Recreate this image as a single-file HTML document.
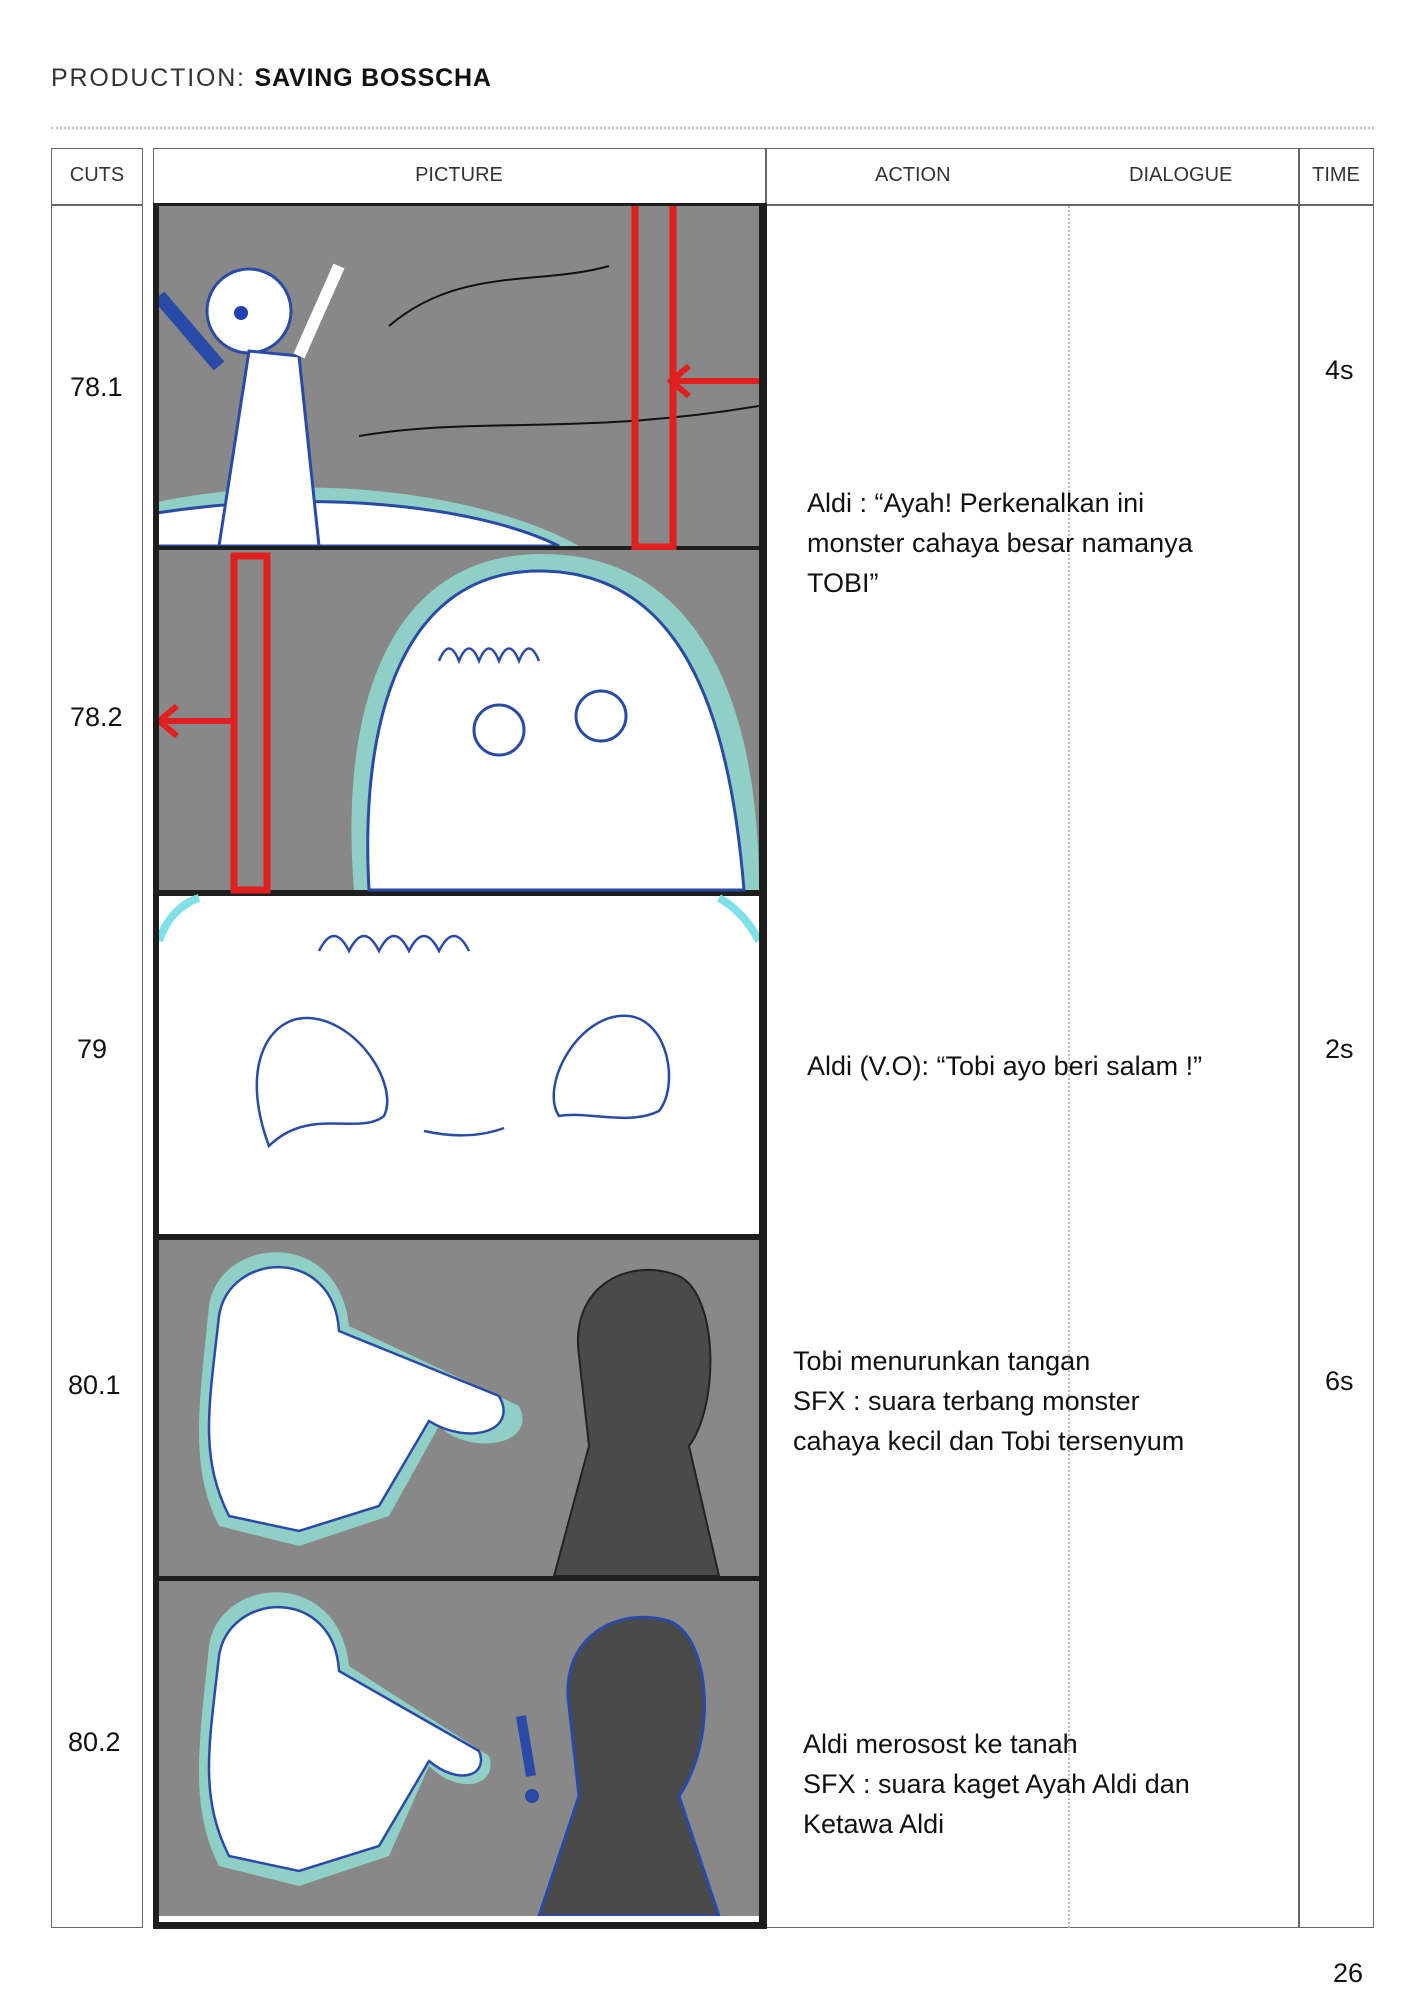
<!DOCTYPE html>
<html><head><meta charset="utf-8"><style>
*{margin:0;padding:0;box-sizing:border-box}
body{width:1414px;height:2000px;background:#fff;position:relative;font-family:"Liberation Sans",sans-serif;color:#111;overflow:hidden}
.a{position:absolute}
.hdr{font-size:20px;color:#333;text-align:center}
.num{font-size:27px;color:#111}
.txt{font-size:27px;line-height:40px;color:#111;white-space:nowrap}
.ln{position:absolute;background:#666}
</style></head><body>
<div class="a" style="left:51px;top:64px;font-size:25px;letter-spacing:1.8px;color:#333">PRODUCTION: <b style="color:#111;letter-spacing:0.8px">SAVING BOSSCHA</b></div>
<div class="a" style="left:51px;top:127px;width:1323px;border-top:2px dotted #bbb"></div>

<div class="a" style="left:51px;top:148px;width:92px;height:1780px;border:1.5px solid #666"></div>
<div class="ln" style="left:51px;top:204px;width:92px;height:1.5px"></div>
<div class="a" style="left:153px;top:148px;width:1221px;height:1780px;border:1.5px solid #666"></div>
<div class="ln" style="left:765px;top:148px;width:1.5px;height:1780px"></div>
<div class="ln" style="left:1298px;top:148px;width:1.5px;height:1780px"></div>
<div class="ln" style="left:153px;top:204px;width:1221px;height:1.5px"></div>
<div class="a" style="left:1068px;top:206px;height:1722px;border-left:2px dotted #bbb"></div>

<div class="a hdr" style="left:51px;top:164px;width:92px">CUTS</div>
<div class="a hdr" style="left:153px;top:164px;width:612px">PICTURE</div>
<div class="a hdr" style="left:875px;top:164px">ACTION</div>
<div class="a hdr" style="left:1129px;top:164px">DIALOGUE</div>
<div class="a hdr" style="left:1298px;top:164px;width:76px">TIME</div>

<div class="a num" style="left:70px;top:372px">78.1</div>
<div class="a num" style="left:70px;top:702px">78.2</div>
<div class="a num" style="left:77px;top:1034px">79</div>
<div class="a num" style="left:68px;top:1370px">80.1</div>
<div class="a num" style="left:68px;top:1727px">80.2</div>
<div class="a num" style="left:1325px;top:355px">4s</div>
<div class="a num" style="left:1325px;top:1034px">2s</div>
<div class="a num" style="left:1325px;top:1366px">6s</div>
<div class="a num" style="left:1333px;top:1958px">26</div>

<div class="a txt" style="left:807px;top:483px">Aldi : “Ayah! Perkenalkan ini<br>monster cahaya besar namanya<br>TOBI”</div>
<div class="a txt" style="left:807px;top:1046px">Aldi (V.O): “Tobi ayo beri salam !”</div>
<div class="a txt" style="left:793px;top:1341px">Tobi menurunkan tangan<br>SFX : suara terbang monster<br>cahaya kecil dan Tobi tersenyum</div>
<div class="a txt" style="left:803px;top:1724px">Aldi merosost ke tanah<br>SFX : suara kaget Ayah Aldi dan<br>Ketawa Aldi</div>

<div class="a" style="left:153px;top:203px;width:614px;height:1726px;background:#1e1e1e"></div>
<svg class="a" style="left:159px;top:206px" width="600" height="1716" viewBox="0 0 600 1716">
<defs><clipPath id="c1"><rect x="0" y="0" width="600" height="340"/></clipPath></defs>
<g clip-path="url(#c1)">
<rect x="0" y="0" width="600" height="340" fill="#888"/>
<path d="M230 120 C300 60 380 80 450 60 M200 230 C320 210 420 230 600 200" stroke="#111" stroke-width="2" fill="none"/>
<path d="M-20 300 C150 260 330 290 420 340 L-20 340Z" fill="#8fcfc5"/>
<path d="M-20 310 C150 280 320 300 400 340 L-20 340Z" fill="#fff" stroke="#2a4aa8" stroke-width="3"/>
<circle cx="90" cy="105" r="42" fill="#fff" stroke="#2a4aa8" stroke-width="3"/>
<path d="M90 145 L60 340 L160 340 L140 150Z" fill="#fff" stroke="#2a4aa8" stroke-width="3"/>
<path d="M60 160 L0 90" stroke="#2a4aa8" stroke-width="14"/>
<path d="M140 150 L180 60" stroke="#fff" stroke-width="12"/>
<circle cx="82" cy="107" r="7" fill="#2340b0"/>
</g>
<rect x="476" y="-5" width="38" height="346" fill="none" stroke="#e0201e" stroke-width="7"/>
<path d="M600 175 L512 175 M530 160 L512 175 L530 190" stroke="#e0201e" stroke-width="6" fill="none"/>
<rect x="0" y="344" width="600" height="340" fill="#888"/>
<path d="M195 684 C180 500 230 350 380 348 C530 346 600 480 600 684Z" fill="#8fcfc5"/>
<path d="M210 684 C200 500 250 365 380 365 C520 365 570 500 585 684Z" fill="#fff" stroke="#2a4aa8" stroke-width="3"/>
<circle cx="340" cy="524" r="25" fill="none" stroke="#2a4aa8" stroke-width="3"/>
<circle cx="442" cy="510" r="25" fill="none" stroke="#2a4aa8" stroke-width="3"/>
<path d="M280 455 q10 -25 20 0 q10 -25 20 0 q10 -25 20 0 q10 -25 20 0 q10 -25 20 0" stroke="#2a4aa8" stroke-width="2.5" fill="none"/>
<rect x="75" y="350" width="33" height="334" fill="none" stroke="#e0201e" stroke-width="7"/>
<path d="M75 515 L0 515 M18 500 L0 515 L18 530" stroke="#e0201e" stroke-width="6" fill="none"/>
<rect x="0" y="690" width="600" height="338" fill="#fff"/>
<path d="M0 735 C10 705 30 695 40 692 M560 692 C575 700 590 715 600 735" stroke="#7fe0e8" stroke-width="8" fill="none"/>
<path d="M110 940 C80 860 110 810 150 812 C200 815 240 880 225 910 C200 930 150 900 110 940Z" fill="none" stroke="#2a4aa8" stroke-width="2.5"/>
<path d="M400 910 C380 880 420 805 470 810 C510 815 520 880 500 905 C470 920 430 905 400 910Z" fill="none" stroke="#2a4aa8" stroke-width="2.5"/>
<path d="M265 925 Q310 935 345 922" stroke="#2a4aa8" stroke-width="2.5" fill="none"/>
<path d="M160 745 q15 -30 30 0 q15 -30 30 0 q15 -30 30 0 q15 -30 30 0 q15 -30 30 0" stroke="#2a4aa8" stroke-width="2.5" fill="none"/>
<rect x="0" y="1034" width="600" height="336" fill="#888"/>
<path d="M50 1100 C60 1030 180 1020 190 1120 L360 1200 C380 1240 310 1250 280 1220 L230 1310 L140 1340 L60 1320 C30 1260 40 1200 50 1100Z" fill="#8fcfc5"/>
<path d="M60 1110 C70 1045 175 1040 180 1125 L340 1190 C360 1225 310 1240 270 1215 L220 1300 L140 1325 L70 1310 C40 1250 50 1200 60 1110Z" fill="#fff" stroke="#2a4aa8" stroke-width="2.5"/>
<path d="M420 1150 C410 1080 470 1050 520 1070 C560 1090 560 1200 530 1240 L560 1370 L395 1370 L430 1240Z" fill="#4a4a4a" stroke="#222" stroke-width="2"/>
<rect x="0" y="1375" width="600" height="335" fill="#888"/>
<path d="M50 1440 C60 1370 180 1360 190 1460 L330 1550 C340 1580 300 1590 270 1560 L230 1650 L140 1680 L60 1660 C30 1600 40 1540 50 1440Z" fill="#8fcfc5"/>
<path d="M60 1450 C70 1385 175 1380 180 1465 L320 1545 C330 1570 300 1580 270 1555 L220 1640 L140 1665 L70 1650 C40 1590 50 1540 60 1450Z" fill="#fff" stroke="#2a4aa8" stroke-width="2.5"/>
<path d="M410 1500 C400 1430 460 1400 510 1415 C550 1430 560 1530 520 1590 L560 1710 L380 1710 L420 1590Z" fill="#4a4a4a" stroke="#2a4aa8" stroke-width="3"/>
<path d="M362 1510 L372 1570" stroke="#2a4aa8" stroke-width="10"/>
<circle cx="373" cy="1590" r="7" fill="#2a4aa8"/>
<rect x="0" y="1710" width="600" height="6" fill="#fff"/>
</svg>
</body></html>
